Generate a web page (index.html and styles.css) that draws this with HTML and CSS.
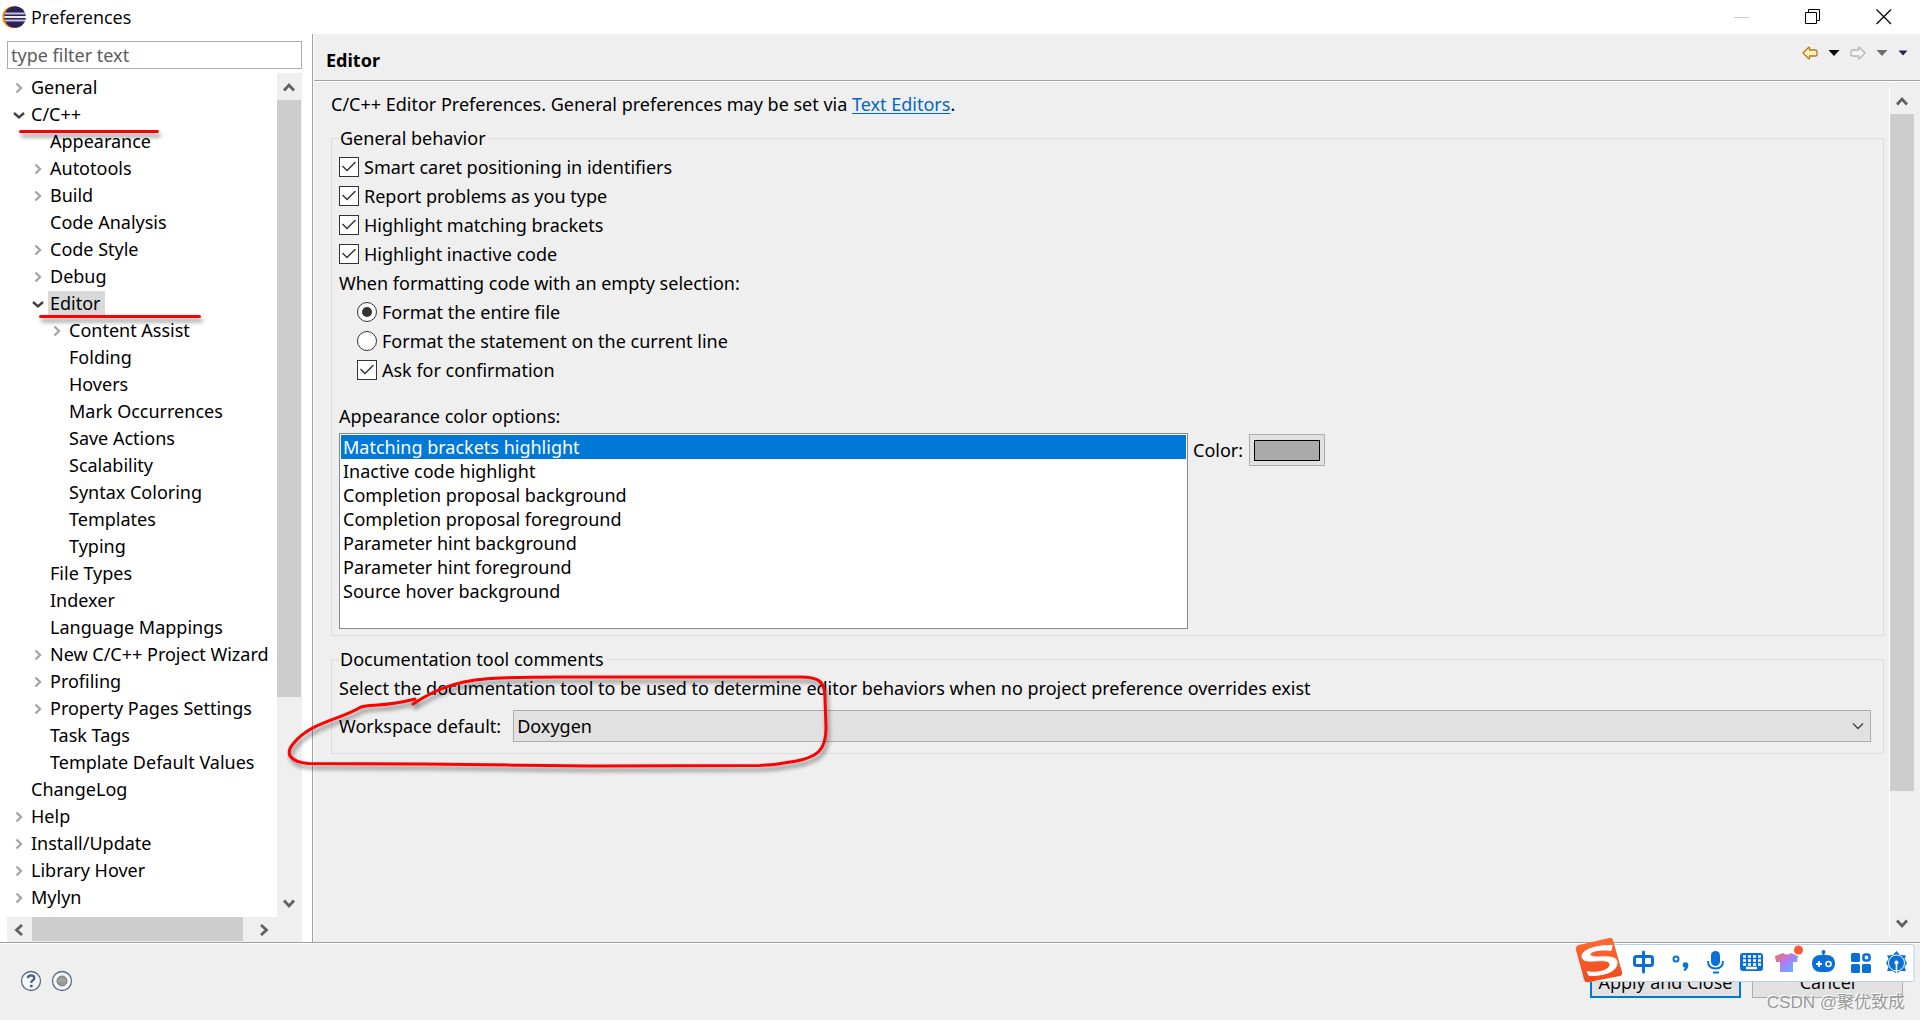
FILE: index.html
```html
<!DOCTYPE html>
<html lang="en">
<head>
<meta charset="utf-8">
<title>Preferences</title>
<link rel="stylesheet" href="styles.css">
</head>
<body>
<svg class="defs" aria-hidden="true">
  <defs>
    <symbol id="closed" viewBox="0 0 12 12"><path d="M3.500 1.500 8 6 3.500 10.500" fill="none" stroke="#a6a6a6" stroke-width="2.400"/></symbol>
    <symbol id="open" viewBox="0 0 12 12"><path d="M1 4 6 8.500 11 4" fill="none" stroke="#404040" stroke-width="2.400"/></symbol>
    <symbol id="chev-up" viewBox="0 0 12 12"><path d="M1 9.500 6 4 11 9.500" fill="none" stroke="#606060" stroke-width="2.800"/></symbol>
    <symbol id="chev-down" viewBox="0 0 12 12"><path d="M1 2.500 6 8 11 2.500" fill="none" stroke="#606060" stroke-width="2.800"/></symbol>
    <symbol id="chev-left" viewBox="0 0 12 12"><path d="M9 1 3.500 6 9 11" fill="none" stroke="#606060" stroke-width="2.800"/></symbol>
    <symbol id="chev-right" viewBox="0 0 12 12"><path d="M3 1 8.500 6 3 11" fill="none" stroke="#606060" stroke-width="2.800"/></symbol>
    <symbol id="arrow" viewBox="0 0 16 14"><path d="M1 7 6.500 1.500H7.500V4H14L15 5V9L14 10H7.500V12.500H6.500Z"/></symbol>
    <symbol id="tri" viewBox="0 0 12 8"><path d="M.5 1H11.500L6 7Z"/></symbol>
  </defs>
</svg>

<div class="window">
  <header class="titlebar">
    <svg class="logo" viewBox="0 0 24 24">
      <circle cx="11" cy="12" r="10.800" fill="#f7941e"/>
      <circle cx="13" cy="12" r="10.800" fill="#2c2255"/>
      <path d="M3 8.500H23M2.500 12H24M3 15.500H23" stroke="#c4c0dc" stroke-width="1.800"/>
      <path d="M2.500 12H24" stroke="#fff" stroke-width="1.400"/>
    </svg>
    <h1 class="title">Preferences</h1>
    <div class="controls">
      <button class="control" aria-label="Minimize" disabled><svg width="16" height="16"><path d="M0 8.500H15" stroke="#c8c8c8"/></svg></button>
      <button class="control" aria-label="Restore"><svg width="16" height="16" fill="none" stroke="#000"><path d="M.5 3.500H11.500V14.500H.5ZM3.500 3V.5H14.500V11.500H12"/></svg></button>
      <button class="control" aria-label="Close"><svg width="16" height="16" stroke="#000" stroke-width="1.200"><path d="M.5.5 15 15M15 .5.5 15"/></svg></button>
    </div>
  </header>

  <div class="body">
    <nav class="side" aria-label="Preference pages">
      <input class="filter" type="text" placeholder="type filter text" aria-label="Filter preference pages">
      <div class="tree-box">
        <ul class="tree">
          <li><div class="row"><svg class="tw"><use href="#closed"/></svg><span class="name">General</span></div></li>
          <li><div class="row"><svg class="tw"><use href="#open"/></svg><span class="name">C/C++</span></div>
            <ul>
              <li><div class="row"><span class="tw"></span><span class="name">Appearance</span></div></li>
              <li><div class="row"><svg class="tw"><use href="#closed"/></svg><span class="name">Autotools</span></div></li>
              <li><div class="row"><svg class="tw"><use href="#closed"/></svg><span class="name">Build</span></div></li>
              <li><div class="row"><span class="tw"></span><span class="name">Code Analysis</span></div></li>
              <li><div class="row"><svg class="tw"><use href="#closed"/></svg><span class="name">Code Style</span></div></li>
              <li><div class="row"><svg class="tw"><use href="#closed"/></svg><span class="name">Debug</span></div></li>
              <li><div class="row"><svg class="tw"><use href="#open"/></svg><span class="name selected">Editor</span></div>
                <ul>
                  <li><div class="row"><svg class="tw"><use href="#closed"/></svg><span class="name">Content Assist</span></div></li>
                  <li><div class="row"><span class="tw"></span><span class="name">Folding</span></div></li>
                  <li><div class="row"><span class="tw"></span><span class="name">Hovers</span></div></li>
                  <li><div class="row"><span class="tw"></span><span class="name">Mark Occurrences</span></div></li>
                  <li><div class="row"><span class="tw"></span><span class="name">Save Actions</span></div></li>
                  <li><div class="row"><span class="tw"></span><span class="name">Scalability</span></div></li>
                  <li><div class="row"><span class="tw"></span><span class="name">Syntax Coloring</span></div></li>
                  <li><div class="row"><span class="tw"></span><span class="name">Templates</span></div></li>
                  <li><div class="row"><span class="tw"></span><span class="name">Typing</span></div></li>
                </ul>
              </li>
              <li><div class="row"><span class="tw"></span><span class="name">File Types</span></div></li>
              <li><div class="row"><span class="tw"></span><span class="name">Indexer</span></div></li>
              <li><div class="row"><span class="tw"></span><span class="name">Language Mappings</span></div></li>
              <li><div class="row"><svg class="tw"><use href="#closed"/></svg><span class="name">New C/C++ Project Wizard</span></div></li>
              <li><div class="row"><svg class="tw"><use href="#closed"/></svg><span class="name">Profiling</span></div></li>
              <li><div class="row"><svg class="tw"><use href="#closed"/></svg><span class="name">Property Pages Settings</span></div></li>
              <li><div class="row"><span class="tw"></span><span class="name">Task Tags</span></div></li>
              <li><div class="row"><span class="tw"></span><span class="name">Template Default Values</span></div></li>
            </ul>
          </li>
          <li><div class="row"><span class="tw"></span><span class="name">ChangeLog</span></div></li>
          <li><div class="row"><svg class="tw"><use href="#closed"/></svg><span class="name">Help</span></div></li>
          <li><div class="row"><svg class="tw"><use href="#closed"/></svg><span class="name">Install/Update</span></div></li>
          <li><div class="row"><svg class="tw"><use href="#closed"/></svg><span class="name">Library Hover</span></div></li>
          <li><div class="row"><svg class="tw"><use href="#closed"/></svg><span class="name">Mylyn</span></div></li>
        </ul>
        <div class="vbar">
          <svg class="cap"><use href="#chev-up"/></svg>
          <div class="track"><div class="thumb" style="height:75.500%"></div></div>
          <svg class="cap"><use href="#chev-down"/></svg>
        </div>
        <div class="hbar">
          <svg class="cap"><use href="#chev-left"/></svg>
          <div class="track"><div class="thumb" style="width:96%"></div></div>
          <svg class="cap"><use href="#chev-right"/></svg>
        </div>
      </div>
    </nav>

    <main class="page">
      <div class="page-head">
        <h2 class="page-title">Editor</h2>
        <div class="history">
          <button class="tool" aria-label="Back"><svg class="arrow" fill="#fff3c4" stroke="#b87a14" stroke-width="1.300"><use href="#arrow"/></svg></button>
          <button class="tool" aria-label="Back history"><svg class="tri" fill="#000"><use href="#tri"/></svg></button>
          <button class="tool" aria-label="Forward"><svg class="arrow flip" fill="#f4f4f4" stroke="#b4b4b4" stroke-width="1.300"><use href="#arrow"/></svg></button>
          <button class="tool" aria-label="Forward history"><svg class="tri" fill="#6e6e72"><use href="#tri"/></svg></button>
          <button class="tool" aria-label="Menu"><svg class="tri small" fill="#33204f"><use href="#tri"/></svg></button>
        </div>
      </div>
      <div class="scroll">
        <div class="content">
          <p class="intro">C/C++ Editor Preferences. General preferences may be set via <a href="#text-editors">Text Editors</a>.</p>

          <fieldset class="group general">
            <legend>General behavior</legend>
            <label class="option"><input type="checkbox" checked>Smart caret positioning in identifiers</label>
            <label class="option"><input type="checkbox" checked>Report problems as you type</label>
            <label class="option"><input type="checkbox" checked>Highlight matching brackets</label>
            <label class="option"><input type="checkbox" checked>Highlight inactive code</label>
            <p class="option">When formatting code with an empty selection:</p>
            <div class="indent">
              <label class="option"><input type="radio" name="format" checked>Format the entire file</label>
              <label class="option"><input type="radio" name="format">Format the statement on the current line</label>
              <label class="option"><input type="checkbox" checked>Ask for confirmation</label>
            </div>
            <label class="list-label" for="colors">Appearance color options:</label>
            <div class="colors">
              <select id="colors" class="list" size="8">
                <option selected>Matching brackets highlight</option>
                <option>Inactive code highlight</option>
                <option>Completion proposal background</option>
                <option>Completion proposal foreground</option>
                <option>Parameter hint background</option>
                <option>Parameter hint foreground</option>
                <option>Source hover background</option>
              </select>
              <div class="picker">
                <label for="swatch">Color:</label>
                <button id="swatch" class="swatch"><span class="chip"></span></button>
              </div>
            </div>
          </fieldset>

          <fieldset class="group docs">
            <legend>Documentation tool comments</legend>
            <p class="option">Select the documentation tool to be used to determine editor behaviors when no project preference overrides exist</p>
            <div class="combo-row">
              <label for="tool">Workspace default:</label>
              <div class="combo">
                <select id="tool"><option>Doxygen</option></select>
                <svg class="combo-arrow" viewBox="0 0 12 8"><path d="M1 1.500 6 6.500 11 1.500" fill="none" stroke="#404040" stroke-width="1.300"/></svg>
              </div>
            </div>
          </fieldset>
        </div>
        <div class="vbar">
          <svg class="cap"><use href="#chev-up"/></svg>
          <div class="track"><div class="thumb" style="height:85%"></div></div>
          <svg class="cap"><use href="#chev-down"/></svg>
        </div>
      </div>
    </main>
  </div>

  <footer class="footer">
    <div class="helpers">
      <button class="round" aria-label="Help"><svg width="22" height="22" viewBox="0 0 22 22"><circle cx="11" cy="11" r="9.500" fill="#f6f7f9" stroke="#5a6b8c" stroke-width="1.300"/><path d="M7.800 8.200Q8 5.300 11.100 5.300 14.300 5.400 14.300 8.100 14.300 9.600 12.600 10.600 11.300 11.400 11.300 13" fill="none" stroke="#4a5f86" stroke-width="2.300"/><path d="M10 14.800H12.600V17.200H10Z" fill="#4a5f86"/></svg></button>
      <button class="round" aria-label="Record"><svg width="22" height="22" viewBox="0 0 22 22"><circle cx="11" cy="11" r="9.500" fill="#f6f7f9" stroke="#5a6b8c" stroke-width="1.300"/><circle cx="11" cy="11" r="5" fill="#989898" stroke="#7c7c7c"/><path d="M7 10.500H15" stroke="#a8a8a8" stroke-width="2"/></svg></button>
    </div>
    <div class="actions">
      <button class="action primary">Apply and Close</button>
      <button class="action">Cancel</button>
    </div>
  </footer>

  <div class="ime">
    <svg viewBox="0 0 340 48">
      <defs>
        <linearGradient id="shirt" x1="0" y1="0" x2="1" y2="1"><stop offset="0" stop-color="#ff6a50"/><stop offset=".5" stop-color="#a880ff"/><stop offset="1" stop-color="#40c8ff"/></linearGradient>
        <linearGradient id="sogou" x1="0" y1="0" x2="0" y2="1"><stop offset="0" stop-color="#ff6b35"/><stop offset="1" stop-color="#ee4a18"/></linearGradient>
      </defs>
      <rect x="8" y="7.500" width="331" height="37" rx="2" fill="#fff" stroke="#b8cfec"/>
      <path d="M4 8 34 1Q37 0 38 3L47 35Q48 38 45 39L14 45Q10 46 9 42L1 13Q0 9 4 8Z" fill="url(#sogou)"/>
      <path d="M37 8.500C24 8 6 12 7 20 8 29 33 19 35 27 36 33 22 37 12 34.500L14 38.500C28 39 43 35 42 25 41 15 16 24 15 17 15 14 27 12 36 13.500Z" fill="#fff" stroke="#fff"/>
      <g fill="none" stroke="#0a70d8" stroke-width="3">
        <rect x="59.500" y="19.500" width="18" height="9" rx="2"/><path d="M68.500 15V35" stroke-linecap="round"/>
        <circle cx="101" cy="22" r="2.500" stroke-width="2"/>
      </g>
      <circle cx="110.500" cy="28" r="2.800" fill="#0a70d8"/><path d="M112.200 28Q112.500 31 109 33.500" fill="none" stroke="#0a70d8" stroke-width="2"/>
      <rect x="136" y="14" width="9" height="15" rx="4.500" fill="#0a70d8"/>
      <path d="M133 24Q133 31.500 140.500 31.500 148 31.500 148 24M138 35.500H144" fill="none" stroke="#0a70d8" stroke-width="2"/>
      <rect x="165" y="16" width="23" height="18" rx="3" fill="#0a70d8"/>
      <path d="M168 19.500H171M173 19.500H176M178 19.500H181M183 19.500H186M168 23.500H171M173 23.500H176M178 23.500H181M183 23.500H186M168 27.500H171M173 27.500H176M178 27.500H181M183 27.500H186M171 31H182" stroke="#fff" stroke-width="2.400"/>
      <path d="M200 19 208 16Q212 19 216 16L223 19 222 25 218 25V35H205V25L201 25Z" fill="url(#shirt)"/>
      <circle cx="223.500" cy="13" r="4.500" fill="#ff5830"/>
      <path d="M248.500 14V18" stroke="#0a70d8" stroke-width="2"/><circle cx="248.500" cy="15" r="2" fill="#0a70d8"/>
      <rect x="237" y="18" width="23" height="17" rx="8" fill="#0a70d8"/>
      <path d="M241 27H247M244 24V30" stroke="#fff" stroke-width="1.800"/><circle cx="253.500" cy="27" r="2.500" fill="none" stroke="#fff" stroke-width="1.600"/>
      <g fill="#0a70d8"><rect x="276" y="16" width="9" height="9" rx="1.500"/><rect x="276" y="27" width="9" height="9" rx="1.500"/><rect x="287" y="27" width="9" height="9" rx="1.500"/></g>
      <rect x="288.500" y="17.500" width="6" height="6" rx="2" fill="none" stroke="#0a70d8" stroke-width="2.600"/>
      <path d="M321.500 14 325 18 331 18.500 329.500 22 332 26 329.500 30 331 34 325 34 321.500 37 318 34 312 34 313.500 30 311 26 313.500 22 312 18.500 318 18Z" fill="#0a70d8"/>
      <circle cx="321.500" cy="26" r="8" fill="none" stroke="#fff"/>
      <circle cx="321.500" cy="25.500" r="2" fill="#fff"/><path d="M321.500 25V37" stroke="#fff" stroke-width="1.600"/>
    </svg>
  </div>
  <span class="credit">CSDN @聚优致成</span>

  <svg class="marks" aria-hidden="true">
    <g fill="none" stroke="#f00" stroke-width="3" stroke-linecap="round" stroke-linejoin="round">
      <path d="M20.500 131.500H157.500M40.500 316.500H199.500"/>
      <path d="M413 704C440 686 465 679 500 678 520 677 540 677 560 677L800 677C820 677 825 682 825 698L826 728C826 748 820 758 790 762 775 765 770 765 760 765.500L591 766 423 764 308 763.500C292 762 284 755 293 744 310 722 340 720 361 707 370 704 385 707 415 699"/>
    </g>
  </svg>
</div>
</body>
</html>
```
FILE: styles.css
```css
* { box-sizing: border-box; }

body {
  margin: 0;
  font: 18px/24px "Noto Sans", "Open Sans", "Noto Sans CJK SC", sans-serif;
  color: #000;
  background: #efefef;
}

p, h1, h2, ul { margin: 0; padding: 0; font: inherit; }
ul { list-style: none; }
svg { display: block; }
button, input, select { font: inherit; color: inherit; margin: 0; }
.defs { position: absolute; width: 0; height: 0; }

.window {
  position: relative;
  display: flex;
  flex-direction: column;
  height: 100vh;
  overflow: hidden;
}

/* title bar */
.titlebar {
  display: flex;
  align-items: center;
  height: 34px;
  padding: 0 1px 0 2px;
  background: #fff;
}
.logo { width: 24px; height: 24px; }
.title { margin-left: 5px; flex: 1; font-family: "Open Sans", sans-serif; }
.controls { display: flex; }
.control {
  display: grid;
  place-items: center;
  width: 71px;
  height: 34px;
  padding: 0;
  border: 0;
  background: none;
}

/* side tree */
.body { display: flex; flex: 1; min-height: 0; }
.side {
  display: flex;
  flex-direction: column;
  width: 313px;
  padding: 7px 10px 0 7px;
  border-right: 1px solid #a0a0a0;
  background: #fff;
}
.filter {
  width: 100%;
  height: 28px;
  padding: 0 3px;
  border: 1px solid #abadb3;
  outline: 0;
  background: #fff;
}
.filter::placeholder { color: #5c5c5c; opacity: 1; }
.tree-box {
  display: grid;
  grid-template: minmax(0, 1fr) 25px / minmax(0, 1fr) 25px;
  flex: 1;
  min-height: 0;
  margin-top: 4px;
  background: #efefef;
}
.tree { overflow: hidden; background: #fff; }
.tree ul { padding-left: 19px; }
.row { display: flex; align-items: center; height: 27px; white-space: nowrap; }
.tw { flex: none; width: 12px; height: 12px; margin: 2px 4px 0 6px; }
.name { padding: 0 4px 0 2px; }
.selected { background: #d9d9d9; }

/* scroll bars */
.vbar, .hbar { display: flex; background: #efefef; }
.vbar { flex-direction: column; width: 25px; }
.cap { flex: none; width: 12px; height: 12px; margin: 7px 6px; }
.vbar .cap:first-child { margin-top: 8px; }
.hbar .cap { margin-right: 7px; }
.track { flex: 1; }
.thumb { background: #cdcdcd; }
.vbar .thumb { width: 24px; }
.hbar .thumb { height: 24px; }

/* page */
.page {
  display: flex;
  flex: 1;
  flex-direction: column;
  min-width: 0;
  border-left: 1px solid #fff;
}
.page-head {
  display: flex;
  align-items: center;
  justify-content: space-between;
  height: 47px;
  padding: 5px 12px 0 12px;
  border-bottom: 1px solid #a0a0a0;
  box-shadow: 0 1px #fff;
}
.page-title { font-weight: 700; }
.history { display: flex; align-items: center; gap: 10px; margin-bottom: 14px; }
.tool { padding: 0; border: 0; background: none; }
.arrow { width: 16px; height: 14px; }
.flip { transform: scaleX(-1); }
.tri { width: 12px; height: 8px; }
.small { width: 10px; }

.scroll {
  display: flex;
  flex: 1;
  min-height: 0;
  padding: 6px 5px 5px 0;
}
.scroll > .vbar { width: 26px; border-left: 1px solid #fff; }
.content { flex: 1; padding: 5px 5px 0 17px; }
.intro a { color: #0066cc; text-underline-offset: 2px; }

.group {
  min-width: 0;
  margin: 10px 0 0;
  padding: 2px 12px 6px 7px;
  border: 1px solid #dcdcdc;
}
.group legend { padding: 0 3px 0 1px; }
.group.docs { margin-top: 11px; padding-bottom: 11px; }
.option { display: flex; align-items: center; height: 29px; }
.indent { padding-left: 18px; }
input[type="checkbox"], input[type="radio"] {
  appearance: none;
  display: grid;
  place-items: center;
  width: 20px;
  height: 20px;
  margin-right: 5px;
  border: 1px solid #333;
  background: #fff;
}
input[type="radio"] { border-radius: 50%; }
input[type="checkbox"]:checked::before {
  content: "";
  width: 14px;
  height: 10px;
  background: #333;
  clip-path: polygon(0 5px, 1px 4px, 5px 8px, 13px 0, 14px 1px, 5px 10px);
}
input[type="radio"]:checked::before {
  content: "";
  width: 10px;
  height: 10px;
  border-radius: 50%;
  background: #333;
}
.list-label { display: block; margin-top: 20px; }
.colors { display: flex; align-items: flex-start; gap: 5px; margin-top: 5px; }
.list {
  flex: 0 1 849px;
  min-width: 0;
  height: 196px;
  padding: 1px;
  border: 1px solid #828790;
  border-radius: 0;
  outline: 0;
  background: #fff;
  overflow: hidden;
}
.list option { height: 24px; min-height: 24px; padding: 0 2px; line-height: 24px; }
.list option:checked { color: #fff; background: #0078d7 linear-gradient(#0078d7, #0078d7); }
.picker { display: flex; align-items: center; gap: 6px; margin-top: 1px; }
.swatch {
  width: 76px;
  height: 32px;
  padding: 4px;
  border: 1px solid #adadad;
  background: #e1e1e1;
}
.chip { display: block; height: 21px; border: 1px solid #000; background: #aaa; }

.combo-row { display: flex; align-items: center; gap: 12px; margin-top: 8px; }
.combo { display: grid; flex: 1; align-items: center; }
.combo select {
  grid-area: 1 / 1;
  appearance: none;
  width: 100%;
  height: 32px;
  padding: 0 3px;
  border: 1px solid #adadad;
  border-radius: 0;
  background: #e1e1e1;
}
.combo-arrow {
  grid-area: 1 / 1;
  justify-self: end;
  width: 12px;
  height: 8px;
  margin-right: 7px;
  pointer-events: none;
}

/* footer */
.footer {
  display: flex;
  align-items: center;
  justify-content: space-between;
  height: 78px;
  padding: 0 17px 1px 20px;
  border-top: 1px solid #a0a0a0;
  box-shadow: inset 0 1px #fff;
}
.helpers { display: flex; gap: 9px; }
.round { padding: 0; border: 0; background: none; }
.actions { display: flex; gap: 11px; }
.action {
  width: 151px;
  height: 34px;
  padding: 2px 0 0;
  border: 1px solid #adadad;
  background: #e1e1e1;
  font-family: "Open Sans", sans-serif;
}
.primary { border: 2px solid #0078d7; }

/* input-method bar floating over the dialog */
.ime { position: absolute; right: 5px; bottom: 35px; width: 340px; height: 48px; }
.credit {
  position: absolute;
  right: 15px;
  bottom: 5px;
  color: #9a9a9a;
  font-family: "Liberation Sans", "Noto Sans CJK SC", sans-serif;
  font-size: 17px;
  text-shadow: -1px -1px #fff;
}
.marks {
  position: absolute;
  inset: 0;
  width: 100%;
  height: 100%;
  pointer-events: none;
  filter: drop-shadow(2px 4px 2px rgb(0 0 0 / 45%));
}
```
